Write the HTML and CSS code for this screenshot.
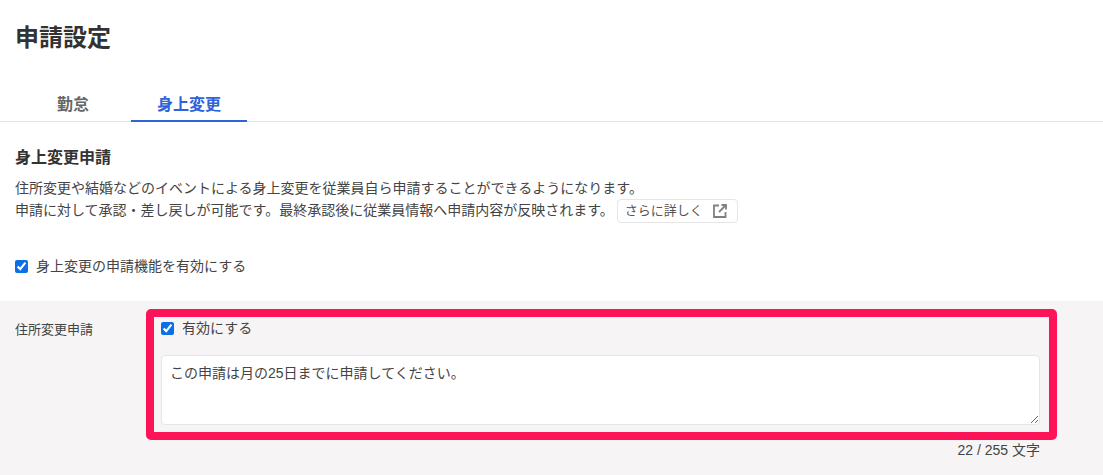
FILE: index.html
```html
<!DOCTYPE html>
<html lang="ja">
<head>
    <meta charset="UTF-8">
    <title>申請設定</title>
    <link rel="stylesheet" href="styles.css">
</head>
<body>

    <h1 class="page-title">申請設定</h1>

    <!-- TABS -->
    <div class="tabs">
        <a class="tab">勤怠</a>
        <a class="tab active">身上変更</a>
    </div>

    <!-- INTRO -->
    <div class="section">
        <h2 class="section-title">身上変更申請</h2>
        <p class="desc">住所変更や結婚などのイベントによる身上変更を従業員自ら申請することができるようになります。</p>
        <p class="desc">申請に対して承認・差し戻しが可能です。最終承認後に従業員情報へ申請内容が反映されます。<a class="more-btn">さらに詳しく
            <svg class="ext-icon" viewBox="0 0 14 14" width="14" height="14" fill="none" stroke="#808080" stroke-width="1.8">
                <path d="M6 1.500H1v11.500h11.500V8"/>
                <path d="M8.500 1H13v4.500"/>
                <path d="M13 1L6 8"/>
            </svg>
        </a></p>
        <label class="check main-check"><input type="checkbox" checked>身上変更の申請機能を有効にする</label>
    </div>

    <!-- SETTINGS PANEL -->
    <div class="panel">
        <div class="panel-label">住所変更申請</div>
        <div class="panel-body">
            <label class="check"><input type="checkbox" checked>有効にする</label>
            <textarea class="note">この申請は月の25日までに申請してください。</textarea>
            <div class="counter">22 / 255 文字</div>
        </div>
        <div class="highlight"></div>
    </div>

</body>
</html>
```

FILE: styles.css
```css
* {
    margin: 0;
    padding: 0;
    box-sizing: border-box;
    font-family: "Liberation Sans", "Noto Sans CJK JP", sans-serif;
}

html, body {
    height: 100%;
}

body {
    display: flex;
    flex-direction: column;
    background: #fff;
    color: #333;
    overflow: hidden;
}

.page-title {
    padding: 21px 15px 0;
    height: 81px;
    font-size: 24px;
    line-height: 34px;
    font-weight: 700;
}

/* TABS */
.tabs {
    display: flex;
    gap: 16px;
    height: 41px;
    padding-left: 31px;
    border-bottom: 1px solid #e3e3e3;
}

.tab {
    height: 41px;
    padding: 0 26px;
    font-size: 16px;
    font-weight: 700;
    line-height: 47px;
    color: #666;
}

.tab.active {
    color: #2f63d8;
    border-bottom: 2px solid #2f63d8;
}

/* INTRO */
.section {
    height: 179px;
    padding: 25px 15px 0;
}

.section-title {
    font-size: 16px;
    font-weight: 700;
    line-height: 22px;
    margin-bottom: 8px;
}

.desc {
    font-size: 14px;
    line-height: 22px;
    color: #444;
}

.more-btn {
    display: inline-flex;
    align-items: center;
    gap: 10px;
    height: 24px;
    margin-left: 3px;
    padding: 0 10px 0 7px;
    border: 1px solid #e6e6e6;
    border-radius: 4px;
    font-size: 13px;
    color: #555;
    vertical-align: middle;
}

.check {
    display: flex;
    align-items: center;
    gap: 8px;
    font-size: 14px;
    line-height: 20px;
    color: #444;
}

.check input {
    width: 13px;
    height: 13px;
    accent-color: #0b6fe8;
}

.main-check {
    margin-top: 33px;
}

/* SETTINGS PANEL */
.panel {
    position: relative;
    flex: 1;
    display: flex;
    background: #f6f4f5;
}

.panel-label {
    width: 161px;
    padding: 20px 0 0 15px;
    font-size: 13px;
    line-height: 18px;
    color: #444;
}

.panel-body {
    width: 879px;
    padding-top: 17px;
}

.note {
    display: block;
    width: 100%;
    height: 70px;
    margin-top: 17px;
    padding: 7px 8px;
    border: 1px solid #e6e6e6;
    border-radius: 4px;
    background: #fff;
    font-size: 14px;
    line-height: 20px;
    color: #444;
}

.counter {
    margin-top: 15px;
    text-align: right;
    font-size: 14px;
    line-height: 20px;
    color: #444;
}

/* annotation frame drawn over the panel */
.highlight {
    position: absolute;
    left: 146px;
    top: 8px;
    width: 911px;
    height: 131px;
    border: 8px solid #fb1458;
    border-radius: 5px;
}
```
